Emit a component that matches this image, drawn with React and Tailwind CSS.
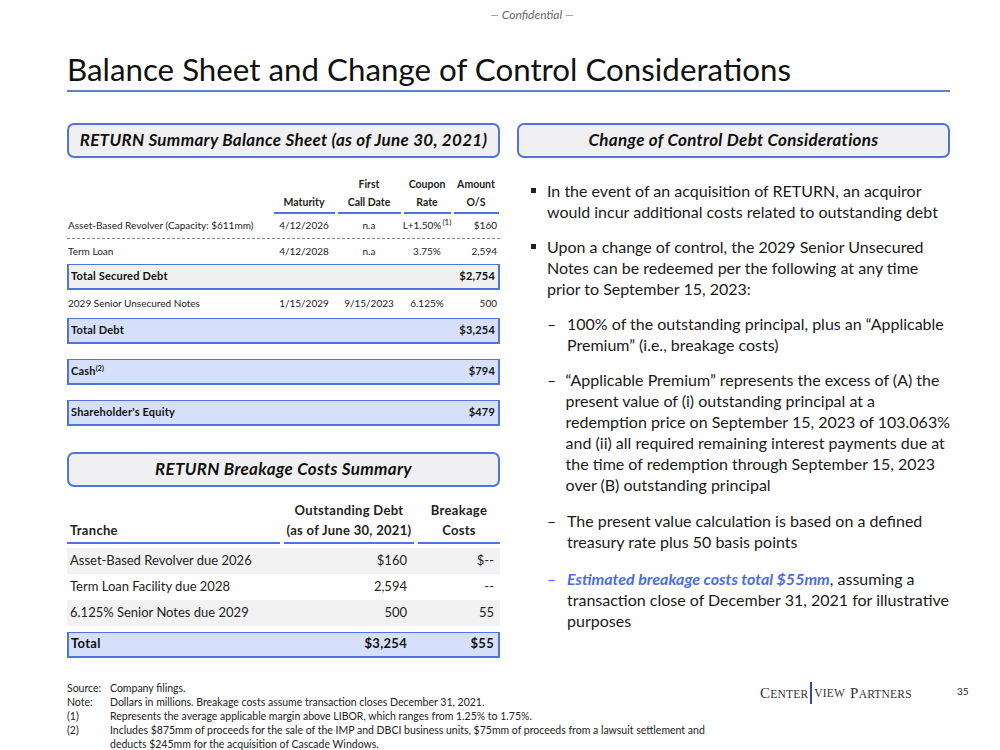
import React from 'react';

const BLUE = 'border-[#4f74dc]';

const HeaderBox = ({ children }) => (
  <div className={`h-[35px] rounded-[7px] border-2 ${BLUE} bg-[#f0f0f2] flex items-center justify-center text-[17px] font-bold italic text-[#111] tracking-[0.3px]`}>
    {children}
  </div>
);

const balCols = ['w-[64px]', 'w-[66px]', 'w-[50px]', 'w-[48px]'];

const BalRow = ({ cells, className = '' }) => (
  <div className={`flex items-center text-[10px] text-[#222] ${className}`}>
    <div className="flex-1 pl-[1px]">{cells[0]}</div>
    <div className={`${balCols[0]} text-center`}>{cells[1]}</div>
    <div className={`${balCols[1]} text-center`}>{cells[2]}</div>
    <div className={`${balCols[2]} text-center`}>{cells[3]}</div>
    <div className={`${balCols[3]} text-right pr-[3px]`}>{cells[4]}</div>
  </div>
);

const TotalBox = ({ label, value, gray }) => (
  <div className={`h-[26px] flex items-center justify-between px-[2px] border-2 ${BLUE} border-t-[1.5px] ${gray ? 'bg-[#f0f0f0]' : 'bg-[#d6e0fb]'} text-[11px] font-bold text-[#111] tracking-[0.2px]`}>
    <span>{label}</span>
    <span className="pr-[1px]">{value}</span>
  </div>
);

const BalanceSheet = () => (
  <div className="mt-[17px]">
    {/* header */}
    <div className="flex items-end text-[10.5px] font-bold text-[#222] leading-[18px]">
      <div className="flex-1" />
      {[
        ['', 'Maturity'],
        ['First', 'Call Date'],
        ['Coupon', 'Rate'],
        ['Amount', 'O/S'],
      ].map(([a, b], i) => (
        <div key={i} className={`${balCols[i]} px-[1.5px]`}>
          <div className="border-b-[2.5px] border-[#4f74dc] text-center pb-[1px]">
            <div>{a || '\u00a0'}</div>
            <div>{b}</div>
          </div>
        </div>
      ))}
    </div>
    <BalRow className="h-[25px] border-b border-dashed border-[#888]" cells={['Asset-Based Revolver (Capacity: $611mm)', '4/12/2026', 'n.a', <span>L+1.50%<sup className="text-[8px] ml-[1px]">(1)</sup></span>, '$160']} />
    <BalRow className="h-[25px]" cells={['Term Loan', '4/12/2028', 'n.a', '3.75%', '2,594']} />
    <TotalBox label="Total Secured Debt" value="$2,754" gray />
    <BalRow className="h-[28px]" cells={['2029 Senior Unsecured Notes', '1/15/2029', '9/15/2023', '6.125%', '500']} />
    <TotalBox label="Total Debt" value="$3,254" />
    <div className="h-[15px]" />
    <TotalBox label={<span>Cash<sup className="text-[7px]">(2)</sup></span>} value="$794" />
    <div className="h-[15px]" />
    <TotalBox label="Shareholder's Equity" value="$479" />
  </div>
);

const brCols = ['w-[134px]', 'w-[84px]'];

const BrRow = ({ cells, className = '' }) => (
  <div className={`h-[26px] flex items-center text-[13px] text-[#222] ${className}`}>
    <div className="flex-1 pl-[3px]">{cells[0]}</div>
    <div className={`${brCols[0]} text-right pr-[9px]`}>{cells[1]}</div>
    <div className={`${brCols[1]} text-right pr-[6px]`}>{cells[2]}</div>
  </div>
);

const Breakage = () => (
  <div className="mt-[13px]">
    <div className="flex items-end text-[13px] font-bold text-[#222] leading-[20px] tracking-[0.3px]">
      <div className="flex-1 pr-[2px]">
        <div className="border-b-[2.5px] border-[#4f74dc] pl-[3px] pb-[2px]">Tranche</div>
      </div>
      <div className={`${brCols[0]} px-[2px]`}>
        <div className="border-b-[2.5px] border-[#4f74dc] text-center pb-[2px]">
          <div>Outstanding Debt</div>
          <div>(as of June 30, 2021)</div>
        </div>
      </div>
      <div className={`${brCols[1]} pl-[2px]`}>
        <div className="border-b-[2.5px] border-[#4f74dc] text-center pb-[2px]">
          <div>Breakage</div>
          <div>Costs</div>
        </div>
      </div>
    </div>
    <div className="mt-[4px]">
      <BrRow className="bg-[#f2f2f2]" cells={['Asset-Based Revolver due 2026', '$160', '$--']} />
      <BrRow cells={['Term Loan Facility due 2028', '2,594', '--']} />
      <BrRow className="bg-[#f2f2f2]" cells={['6.125% Senior Notes due 2029', '500', '55']} />
    </div>
    <div className={`mt-[6px] h-[26px] flex items-center border-2 border-t-[1.5px] ${BLUE} bg-[#d6e0fb] text-[13px] font-bold text-[#111] tracking-[0.3px]`}>
      <div className="flex-1 pl-[2px]">Total</div>
      <div className={`${brCols[0]} text-right pr-[7px]`}>$3,254</div>
      <div className={`${brCols[1]} text-right pr-[4px]`}>$55</div>
    </div>
  </div>
);

const Lines = ({ lines }) => (
  <div>
    {lines.map((l, i) => (
      <div key={i} className="whitespace-nowrap">{l}</div>
    ))}
  </div>
);

const Bullet = ({ lines }) => (
  <div className="flex">
    <div className="w-[16px] flex justify-start pt-[8px]">
      <div className="w-[5px] h-[5px] bg-[#222]" />
    </div>
    <Lines lines={lines} />
  </div>
);

const Dash = ({ lines, blue, className = '' }) => (
  <div className={`flex pl-[16px] ${className}`}>
    <div className={`w-[20px] ${blue ? 'text-[#4a6ee0]' : ''}`}>–</div>
    <Lines lines={lines} />
  </div>
);

const ChangeOfControl = () => (
  <div className="mt-[22px] pl-[14px] text-[16px] leading-[21px] text-[#1a1a1a] flex flex-col gap-[14px]">
    <Bullet lines={['In the event of an acquisition of RETURN, an acquiror', 'would incur additional costs related to outstanding debt']} />
    <Bullet lines={['Upon a change of control, the 2029 Senior Unsecured', 'Notes can be redeemed per the following at any time', 'prior to September 15, 2023:']} />
    <Dash lines={['100% of the outstanding principal, plus an \u201cApplicable', 'Premium\u201d (i.e., breakage costs)']} />
    <Dash
      lines={[
        '\u201cApplicable Premium\u201d represents the excess of (A) the',
        'present value of (i) outstanding principal at a',
        'redemption price on September 15, 2023 of 103.063%',
        'and (ii) all required remaining interest payments due at',
        'the time of redemption through September 15, 2023',
        'over (B) outstanding principal',
      ]}
    />
    <Dash className="mt-[1px]" lines={['The present value calculation is based on a defined', 'treasury rate plus 50 basis points']} />
    <Dash
      blue
      className="mt-[2px]"
      lines={[
        <span>
          <span className="font-bold italic text-[#4a6ee0]">Estimated breakage costs total $55mm</span>, assuming a
        </span>,
        'transaction close of December 31, 2021 for illustrative',
        'purposes',
      ]}
    />
  </div>
);

const notes = [
  ['Source:', 'Company filings.'],
  ['Note:', 'Dollars in millions. Breakage costs assume transaction closes December 31, 2021.'],
  ['(1)', 'Represents the average applicable margin above LIBOR, which ranges from 1.25% to 1.75%.'],
  ['(2)', 'Includes $875mm of proceeds for the sale of the IMP and DBCI business units, $75mm of proceeds from a lawsuit settlement and'],
  ['', 'deducts $245mm for the acquisition of Cascade Windows.'],
];

export default function App() {
  return (
    <div className="w-[1000px] h-[750px] bg-white relative overflow-hidden font-['Lato','Noto_Sans',sans-serif] text-[#1a1a1a]">
      <div className="pt-[6px] text-center text-[12px] italic text-[#666] pl-[64px]">— Confidential —</div>

      <div className="mx-[67px] mt-[26px]">
        <h1 className="text-[31.3px] leading-[38px] text-[#111]">Balance Sheet and Change of Control Considerations</h1>
        <div className="mt-[2px] h-[1.5px] bg-[#5b86c0] w-[883px]" />
      </div>

      <div className="mx-[67px] mt-[31px] grid grid-cols-[433px_433px] gap-x-[17px]">
        <div>
          <HeaderBox>RETURN Summary Balance Sheet (as of June 30, 2021)</HeaderBox>
          <BalanceSheet />
          <div className="mt-[26px]">
            <HeaderBox>RETURN Breakage Costs Summary</HeaderBox>
          </div>
          <Breakage />
        </div>
        <div>
          <HeaderBox>Change of Control Debt Considerations</HeaderBox>
          <ChangeOfControl />
        </div>
      </div>

      <div className="absolute left-[67px] top-[681px] text-[10.5px] leading-[14px] text-[#222]">
        {notes.map(([a, b], i) => (
          <div key={i} className="flex">
            <div className="w-[43px]">{a}</div>
            <div className="whitespace-nowrap">{b}</div>
          </div>
        ))}
      </div>

      <div className="absolute left-[760px] top-[682px] flex items-center font-['Liberation_Serif',serif] text-[#333] tracking-[0.2px]">
        <span className="text-[15px]">C<span className="text-[11.5px]">ENTER</span></span>
        <span className="mx-[2px] w-[2px] h-[22px] bg-[#2b4f9a]" />
        <span className="text-[11.5px]">VIEW</span>
        <span className="text-[15px] ml-[5px]">P<span className="text-[11.5px]">ARTNERS</span></span>
      </div>
      <div className="absolute left-[957px] top-[684px] text-[10px] text-[#222]">35</div>
    </div>
  );
}
